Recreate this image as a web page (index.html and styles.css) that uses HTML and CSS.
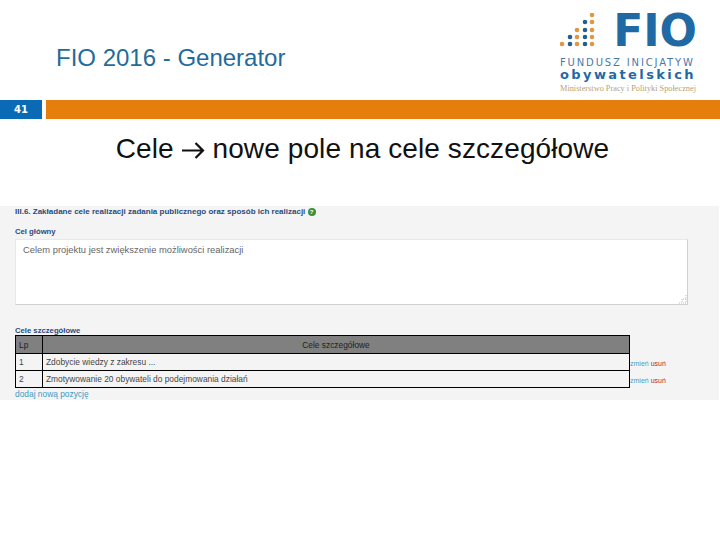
FILE: index.html
```html
<!DOCTYPE html>
<html lang="pl">
<head>
<meta charset="utf-8">
<title>FIO 2016 - Generator</title>
<link rel="stylesheet" href="styles.css">
</head>
<body>
<header class="top">
  <div class="title">FIO 2016 - Generator</div>
  <div class="logo">
    <div class="logo-main">
      <svg class="dots" width="36" height="36" viewBox="0 0 36 36">
        <g fill="#e2963f">
          <circle cx="32" cy="2" r="2.300"/><circle cx="32" cy="9" r="2.300"/><circle cx="32" cy="17" r="2.300"/><circle cx="32" cy="24" r="2.300"/><circle cx="32" cy="31" r="2.300"/>
          <circle cx="17" cy="17" r="2.300"/><circle cx="17" cy="24" r="2.300"/><circle cx="2" cy="31" r="2.300"/><circle cx="17" cy="31" r="2.300"/>
        </g>
        <g fill="#1f5f95">
          <circle cx="25" cy="9" r="2.300"/><circle cx="25" cy="17" r="2.300"/><circle cx="10" cy="24" r="2.300"/><circle cx="25" cy="24" r="2.300"/><circle cx="10" cy="31" r="2.300"/><circle cx="25" cy="31" r="2.300"/>
        </g>
      </svg>
      <span class="fio">FIO</span>
    </div>
    <div class="logo-l1">FUNDUSZ INICJATYW</div>
    <div class="logo-l2">obywatelskich</div>
    <div class="logo-l3">Ministerstwo Pracy i Polityki Społecznej</div>
  </div>
</header>
<div class="bar">
  <div class="num">41</div>
  <div class="orange"></div>
</div>
<h1 class="heading">Cele <svg class="arrow" width="23" height="17" viewBox="0 0 23 17"><path d="M0 8.500H21M13.500 1L21 8.500L13.500 16" fill="none" stroke="#111" stroke-width="2.200"/></svg> nowe pole na cele szczegółowe</h1>
<section class="panel">
  <div class="sec-title">III.6. Zakładane cele realizacji zadania publicznego oraz sposób ich realizacji <span class="help">?</span></div>
  <div class="label label-main">Cel główny</div>
  <div class="area">Celem projektu jest zwiększenie możliwości realizacji
    <svg class="grip" width="10" height="10" viewBox="0 0 10 10"><path d="M9 1V9H1M9 5H5V9" fill="none" stroke="#bbb" stroke-dasharray="1 1"/></svg>
  </div>
  <div class="label label-sub">Cele szczegółowe</div>
  <div class="table-row">
    <table class="goals">
      <thead><tr><th class="lp">Lp</th><th>Cele szczegółowe</th></tr></thead>
      <tbody>
        <tr><td>1</td><td>Zdobycie wiedzy z zakresu ...</td></tr>
        <tr><td>2</td><td>Zmotywowanie 20 obywateli do podejmowania działań</td></tr>
      </tbody>
    </table>
    <div class="actions">
      <div class="act"><span class="edit">zmień</span> <span class="del">usuń</span></div>
      <div class="act"><span class="edit">zmień</span> <span class="del">usuń</span></div>
    </div>
  </div>
  <div class="add">dodaj nową pozycję</div>
</section>
</body>
</html>
```
FILE: styles.css
```css
* { box-sizing: border-box; }
html, body { margin: 0; padding: 0; background: #fff; }
body { width: 720px; height: 540px; overflow: hidden; font-family: "Liberation Sans", Arial, sans-serif; }

.top { display: flex; justify-content: space-between; height: 100px; padding: 13px 24px 0 56px; }
.title { font-size: 24px; line-height: 26px; color: #1f6c9c; padding-top: 32px; }

.logo { width: 136px; display: flex; flex-direction: column; align-items: flex-start; }
.logo-main { display: flex; width: 100%; justify-content: space-between; align-items: flex-start; height: 36px; }
.dots { display: block; }
.fio { font-family: "DejaVu Sans", sans-serif; font-weight: 700; font-size: 44px; line-height: 36px; color: #1f6aa5; margin-right: -1px; }
.logo-l1 { font-family: "DejaVu Sans", sans-serif; font-size: 10px; line-height: 10px; margin-top: 9px; color: #4a78ad; white-space: nowrap; letter-spacing: 1.850px; }
.logo-l2 { font-family: "DejaVu Sans", sans-serif; font-weight: 700; font-size: 13px; line-height: 12px; margin-top: 1px; color: #1f6aa5; white-space: nowrap; letter-spacing: 2.400px; }
.logo-l3 { font-family: "Liberation Serif", serif; font-size: 8.300px; line-height: 10px; margin-top: 3px; color: #b5a27c; white-space: nowrap; }

.bar { display: flex; gap: 4px; height: 19px; }
.num { width: 42px; background: #0a6ab5; color: #fff; font-family: "DejaVu Sans", sans-serif; font-weight: 700; font-size: 10px; line-height: 19px; text-align: center; }
.orange { flex: 1; background: #e57e0c; }

.heading { margin: 0; padding: 14px 0 0 5px; height: 87px; font-weight: 400; font-size: 28px; letter-spacing: 0.100px; line-height: 32px; color: #111; text-align: center; }
.arrow { display: inline-block; vertical-align: -1px; }

.panel { width: 719px; height: 194px; background: #f4f4f4; padding: 1px 31px 0 15px; color: #555; }
.sec-title { font-size: 8px; line-height: 10px; font-weight: 700; color: #2b4a7a; }
.help { display: inline-block; width: 8px; height: 8px; border-radius: 50%; background: #3f8f3a; color: #fff; font-size: 6px; line-height: 8px; text-align: center; }
.label { font-size: 7.700px; line-height: 10px; font-weight: 700; color: #2b4a7a; }
.label-main { margin-top: 10px; }
.label-sub { margin-top: 21px; height: 9px; }
.area { position: relative; height: 66px; margin-top: 2px; background: #fff; border: 1px solid #d0d0d0; border-top-color: #e8e8e8; border-left-color: #e8e8e8; padding: 4px 7px; font-size: 9.400px; line-height: 12px; color: #666; }
.grip { position: absolute; right: 0; bottom: 0; }

.table-row { display: flex; }
.goals { width: 615px; height: 53px; border-collapse: collapse; font-size: 8.400px; color: #444; table-layout: fixed; }
.goals th, .goals td { border: 1px solid #000; padding: 0 3px; height: 17px; line-height: 10px; }
.goals th { background: #808080; font-weight: 400; color: #222; height: 18px; }
.goals .lp { width: 27px; text-align: left; }
.actions { padding-top: 24px; font-size: 7px; display: flex; flex-direction: column; gap: 8px; }
.act { line-height: 9px; white-space: nowrap; }
.edit { color: #4a9fc0; }
.del { color: #c0272d; }
.add { font-size: 8.400px; line-height: 11px; padding-top: 1px; color: #3d9ac4; }
```
